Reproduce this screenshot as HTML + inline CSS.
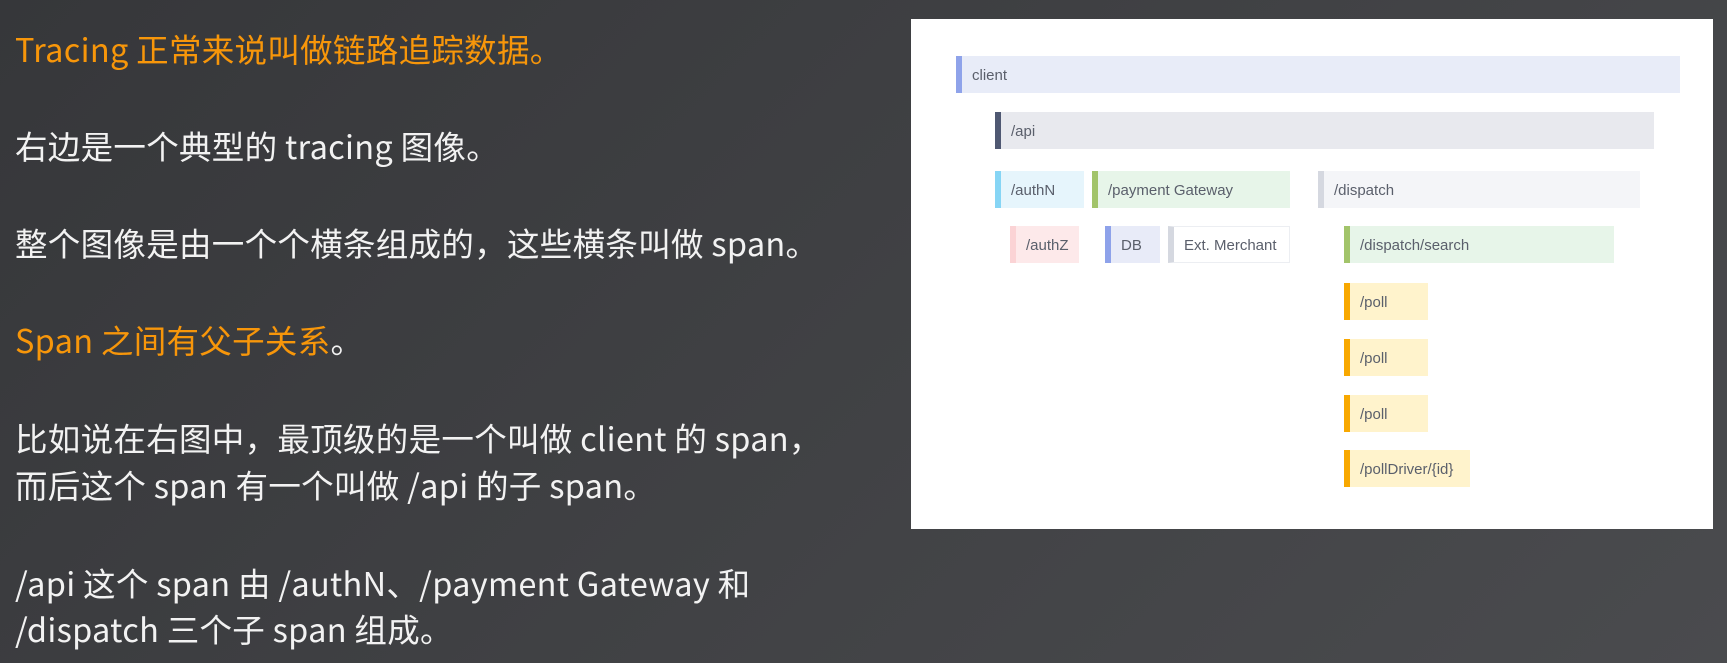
<!DOCTYPE html>
<html><head><meta charset="utf-8"><style>
html,body{margin:0;padding:0;}
body{width:1727px;height:663px;overflow:hidden;position:relative;background:linear-gradient(135deg,#36373a 0%,#424346 60%,#4a4b4e 100%);font-family:"Noto Sans CJK SC","Liberation Sans",sans-serif;}
.t{position:absolute;left:15px;font-size:32.5px;color:#f2f2f2;white-space:nowrap;line-height:40px;letter-spacing:0.3px;}
.o{color:#f7960a;}
.panel{position:absolute;left:911px;top:19px;width:802px;height:510px;background:#fff;}
.b{position:absolute;height:37px;box-sizing:border-box;font-family:"Liberation Sans","Noto Sans CJK SC",sans-serif;font-size:15px;color:#5a5f6b;line-height:39px;padding-left:10px;border-left:6px solid;}
</style></head><body>
<div class="t o" style="top:29px">Tracing 正常来说叫做链路追踪数据。</div>
<div class="t" style="top:126px">右边是一个典型的 tracing 图像。</div>
<div class="t" style="top:223px">整个图像是由一个个横条组成的，这些横条叫做 span。</div>
<div class="t o" style="top:320px">Span 之间有父子关系<span style="color:#f2f2f2">。</span></div>
<div class="t" style="top:418px">比如说在右图中，最顶级的是一个叫做 client 的 span，</div>
<div class="t" style="top:465px">而后这个 span 有一个叫做 /api 的子 span。</div>
<div class="t" style="top:563px">/api 这个 span 由 /authN、/payment Gateway 和</div>
<div class="t" style="top:609px">/dispatch 三个子 span 组成。</div>
<div class="panel"></div>
<div class="b" style="left:956px;top:56px;width:724px;background:#e8ecf8;border-color:#8fa3ea">client</div>
<div class="b" style="left:995px;top:112px;width:659px;background:#e8e9ee;border-color:#4f5872">/api</div>
<div class="b" style="left:995px;top:171px;width:89px;background:#e6f5fc;border-color:#86d5f5">/authN</div>
<div class="b" style="left:1092px;top:171px;width:198px;background:#e7f5e9;border-color:#a2c46a">/payment Gateway</div>
<div class="b" style="left:1318px;top:171px;width:322px;background:#f4f5f8;border-color:#d5d8e0">/dispatch</div>
<div class="b" style="left:1010px;top:226px;width:69px;background:#fde9ea;border-color:#fbd3d5">/authZ</div>
<div class="b" style="left:1105px;top:226px;width:55px;background:#e8ebf8;border-color:#8ea2ea">DB</div>
<div class="b" style="left:1168px;top:226px;width:122px;background:#fff;border:1px solid #eceef2;border-left:6px solid #d5d8e0;line-height:37px">Ext. Merchant</div>
<div class="b" style="left:1344px;top:226px;width:270px;background:#e7f5e9;border-color:#a2c46a">/dispatch/search</div>
<div class="b" style="left:1344px;top:283px;width:84px;background:#fff3cc;border-color:#f8a800">/poll</div>
<div class="b" style="left:1344px;top:339px;width:84px;background:#fff3cc;border-color:#f8a800">/poll</div>
<div class="b" style="left:1344px;top:395px;width:84px;background:#fff3cc;border-color:#f8a800">/poll</div>
<div class="b" style="left:1344px;top:450px;width:126px;background:#fff3cc;border-color:#f8a800">/pollDriver/{id}</div>
</body></html>
